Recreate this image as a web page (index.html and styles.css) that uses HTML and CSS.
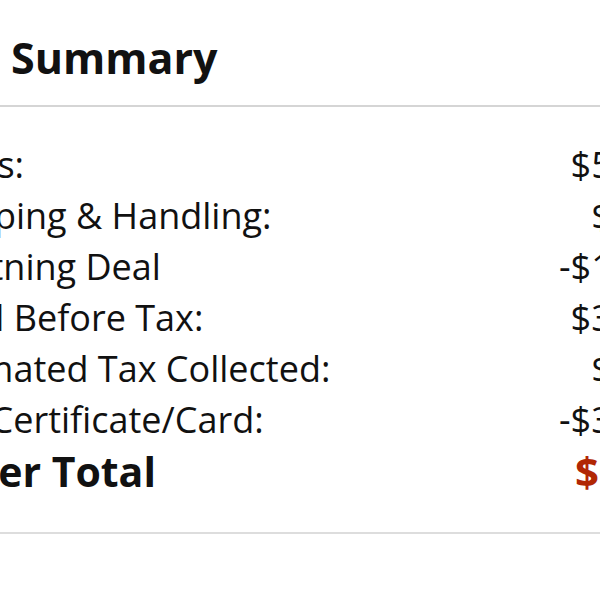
FILE: index.html
```html
<!DOCTYPE html>
<html lang="en">
<head>
<meta charset="utf-8">
<title>Order Summary</title>
<link rel="stylesheet" href="styles.css">
</head>
<body>
<main class="summary">
  <h2 class="title">Order Summary</h2>
  <div class="rows">
    <div class="row"><span class="label">Items:</span><span class="value">$50.98</span></div>
    <div class="row"><span class="label">Shipping &amp; Handling:</span><span class="value">$5.99</span></div>
    <div class="row"><span class="label">Lightning Deal</span><span class="value">-$19.99</span></div>
    <div class="row"><span class="label">Total Before Tax:</span><span class="value">$36.98</span></div>
    <div class="row"><span class="label">Estimated Tax Collected:</span><span class="value">$2.59</span></div>
    <div class="row"><span class="label">Gift Certificate/Card:</span><span class="value">-$39.57</span></div>
    <div class="row total"><span class="label">Order Total</span><span class="value price">$0.00</span></div>
  </div>
</main>
</body>
</html>
```
FILE: styles.css
```css
html, body {
  margin: 0;
  padding: 0;
  background: #fff;
  overflow: hidden;
}
body {
  font-family: "Open Sans", "Noto Sans", sans-serif;
  color: #111;
  width: 600px;
  height: 600px;
}
.summary {
  margin-left: -79px;
  width: 762px;
}
.title {
  margin: 0;
  padding: 33px 0 22px 0;
  font-size: 43px;
  line-height: 50px;
  font-weight: 700;
  text-indent: -47px;
  white-space: nowrap;
}
.rows {
  border-top: 2px solid #d5d5d5;
  border-bottom: 2px solid #dddddd;
  padding: 32px 0 35px 0;
}
.row {
  display: flex;
  justify-content: space-between;
  font-size: 36px;
  line-height: 51px;
  white-space: nowrap;
}
.total {
  font-size: 41px;
  font-weight: 700;
  line-height: 52px;
}
.price {
  color: #b12704;
  font-size: 42px;
}
```
